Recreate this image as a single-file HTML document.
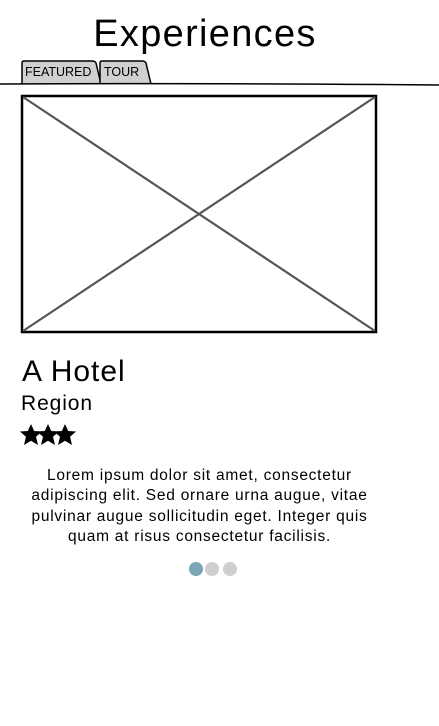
<!DOCTYPE html>
<html><head><meta charset="utf-8"><style>
body{margin:0;width:439px;height:726px;background:#fff;position:relative;overflow:hidden;font-family:"Liberation Sans",sans-serif;color:#000}
.a{position:absolute;white-space:nowrap}
</style></head><body>
<div class="a" style="left:0;width:410px;text-align:center;top:12px;font-size:38px;line-height:44px;letter-spacing:1.3px">Experiences</div>
<svg class="a" style="left:0;top:0" width="439" height="726">
<path d="M22 84 L22 63 Q22 61 24 61 L92 61 Q95 61 96 63 L101 84" fill="#d0d0d0" stroke="#000" stroke-width="1.5"/>
<path d="M100 84 L100 63 Q100 61 102 61 L142 61 Q145 61 146 63 L151 84" fill="#d0d0d0" stroke="#000" stroke-width="1.5"/>
<path d="M0 84 Q200 83 439 85" fill="none" stroke="#000" stroke-width="1.5"/>
<text x="25" y="76" font-family="Liberation Sans" font-size="12.5">FEATURED</text>
<text x="104" y="76" font-family="Liberation Sans" font-size="12.5">TOUR</text>
<rect x="22" y="96" width="354" height="236" fill="#fff" stroke="#000" stroke-width="2.5"/>
<path d="M23 97 L375 331 M375 97 L23 331" stroke="#555" stroke-width="2.2"/>
<g fill="#000">
<polygon id="s" points="31,424 34.2,431 42,431.5 36,436.8 38,445 31,440.8 24,445 26,436.8 20,431.5 27.8,431"/>
<use href="#s" x="17"/><use href="#s" x="34"/>
</g>
<circle cx="196" cy="569" r="7" fill="#7aa5b5"/>
<circle cx="212" cy="569" r="7" fill="#cfcfcf"/>
<circle cx="230" cy="569" r="7" fill="#cfcfcf"/>
</svg>
<div class="a" style="left:22px;top:354px;font-size:30px;line-height:36px;letter-spacing:1px">A Hotel</div>
<div class="a" style="left:21px;top:391px;font-size:21px;line-height:26px;letter-spacing:0.9px">Region</div>
<div class="a" style="left:0;width:399px;text-align:center;top:466px;font-size:15.5px;line-height:20.3px;letter-spacing:0.75px;white-space:normal">Lorem ipsum dolor sit amet, consectetur<br>adipiscing elit. Sed ornare urna augue, vitae<br>pulvinar augue sollicitudin eget. Integer quis<br>quam at risus consectetur facilisis.</div>
</body></html>
